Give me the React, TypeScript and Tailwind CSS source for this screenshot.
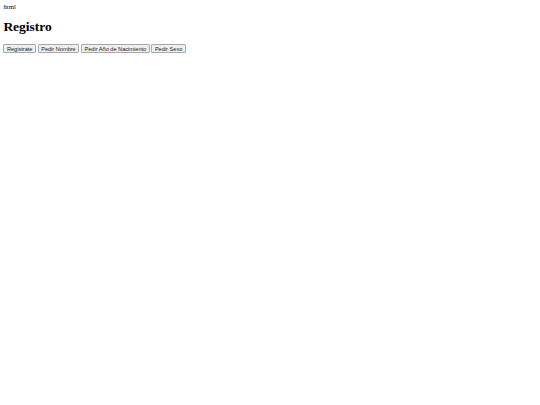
const BUTTONS = ["Registrate", "Pedir Nombre", "Pedir Año de Nacimiento", "Pedir Sexo"];

export default function App() {
  return (
    <div className="min-h-[405px] bg-white p-[3.375px] font-['Liberation_Serif',serif] text-[6.75px] leading-[normal] text-black">
      html
      <h1 className="my-[9.05px] text-[13.5px] font-bold leading-[normal]">Registro</h1>
      <div>
        {BUTTONS.map((label, i) => (
          <span key={label}>
            {i > 0 && " "}
            <button className="rounded-[1px] border-[0.6px] border-[#a8a8a8] bg-[#efefef] px-[2.5px] py-[0.5px] font-['Liberation_Sans',Arial,sans-serif] text-[5.62px] leading-[normal] text-[#222]">
              {label}
            </button>
          </span>
        ))}
      </div>
    </div>
  );
}
